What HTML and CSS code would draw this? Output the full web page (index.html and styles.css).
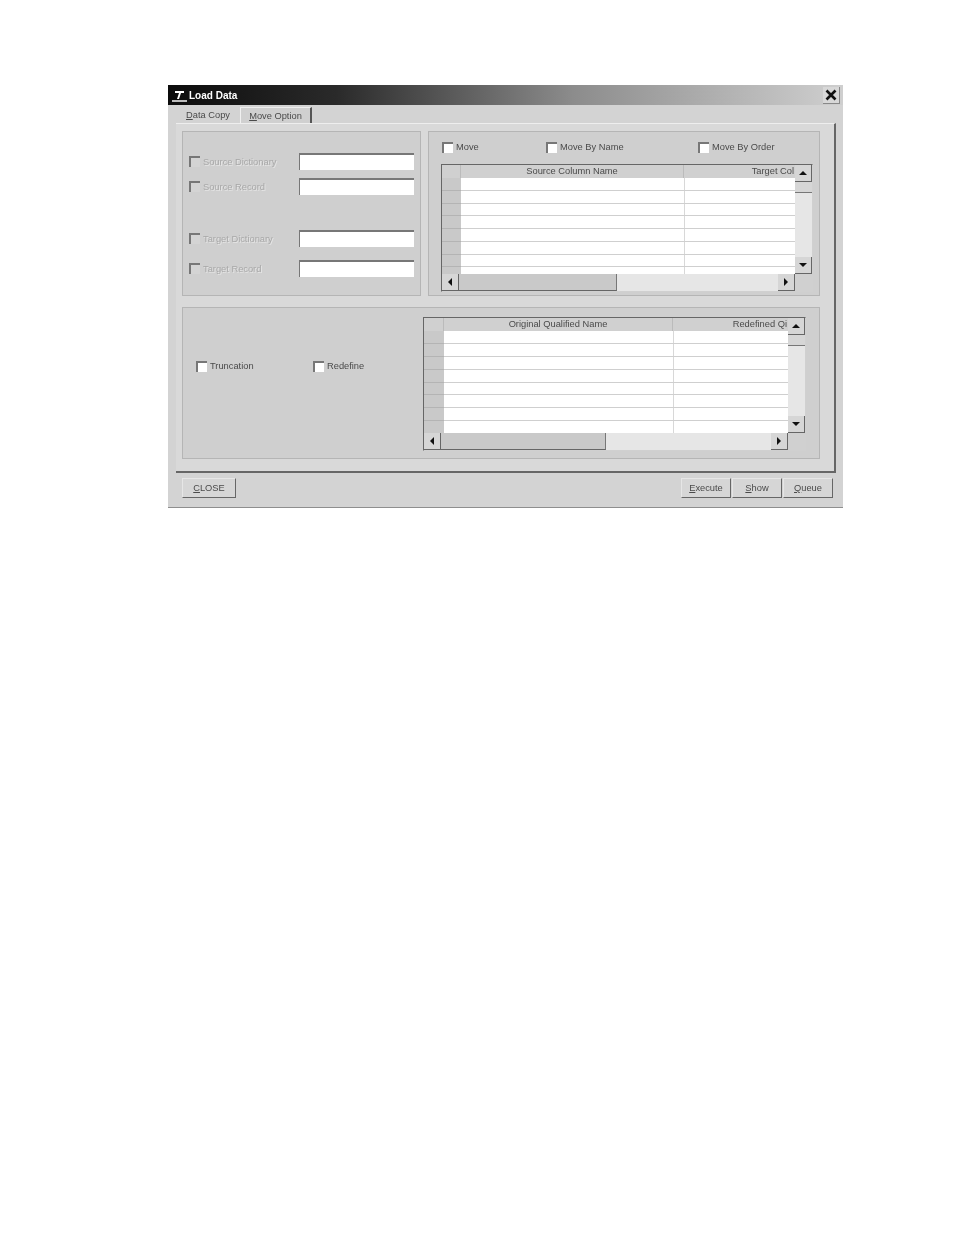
FILE: index.html
```html
<!DOCTYPE html>
<html lang="en">
<head>
    <meta charset="UTF-8">
    <meta name="viewport" content="width=device-width, initial-scale=1.0">
    <title>Load Data</title>

    <link rel="stylesheet" href="styles.css">
</head>
<body>
<div class="window">
    <div class="titlebar">
        <svg class="app-icon" width="17" height="15" viewBox="0 0 17 15">
            <path d="M4 3H13V5H10L8 11H6L8 5H4Z" fill="#fff"/>
            <path d="M1 12H16V14H1Z" fill="#bbb"/>
        </svg>
        <span class="title-text">Load Data</span>
        <button class="close-btn">
            <svg width="12" height="12" viewBox="0 0 12 12">
                <path d="M1.5 1.5L10.5 10.5M10.5 1.5L1.5 10.5" stroke="#111" stroke-width="2.6"/>
            </svg>
        </button>
    </div>

    <div class="tabs">
        <div class="tab tab-flat"><u>D</u>ata Copy</div>
        <div class="tab tab-raised"><u>M</u>ove Option</div>
    </div>

    <div class="page">
        <div class="top-row">
            <div class="group group-left">
                <div class="field">
                    <label class="check disabled"><span class="box"></span>Source Dictionary</label>
                    <div class="input"></div>
                </div>
                <div class="field gap-small">
                    <label class="check disabled"><span class="box"></span>Source Record</label>
                    <div class="input"></div>
                </div>
                <div class="field gap-large">
                    <label class="check disabled"><span class="box"></span>Target Dictionary</label>
                    <div class="input"></div>
                </div>
                <div class="field gap-medium">
                    <label class="check disabled"><span class="box"></span>Target Record</label>
                    <div class="input"></div>
                </div>
            </div>

            <div class="group group-right">
                <div class="check-row">
                    <label class="check move-all"><span class="box"></span>Move</label>
                    <label class="check move-name"><span class="box"></span>Move By Name</label>
                    <label class="check"><span class="box"></span>Move By Order</label>
                </div>
                <div class="data-grid grid-source">
                    <div class="grid-head">
                        <div class="head-cell"></div>
                        <div class="head-cell head-first">Source Column Name</div>
                        <div class="head-cell head-second">Target Col</div>
                    </div>
                    <div class="vscroll">
                        <div class="sb-btn"><span class="arrow arrow-up"></span></div>
                        <div class="sb-thumb-v"></div>
                        <div class="sb-track"></div>
                        <div class="sb-btn"><span class="arrow arrow-down"></span></div>
                    </div>
                    <div class="grid-body">
                        <div class="row"><div class="row-head"></div><div class="cell"></div><div class="cell"></div></div>
                        <div class="row"><div class="row-head"></div><div class="cell"></div><div class="cell"></div></div>
                        <div class="row"><div class="row-head"></div><div class="cell"></div><div class="cell"></div></div>
                        <div class="row"><div class="row-head"></div><div class="cell"></div><div class="cell"></div></div>
                        <div class="row"><div class="row-head"></div><div class="cell"></div><div class="cell"></div></div>
                        <div class="row"><div class="row-head"></div><div class="cell"></div><div class="cell"></div></div>
                        <div class="row"><div class="row-head"></div><div class="cell"></div><div class="cell"></div></div>
                        <div class="row"><div class="row-head"></div><div class="cell"></div><div class="cell"></div></div>
                    </div>
                    <div class="hscroll">
                        <div class="sb-btn"><span class="arrow arrow-left"></span></div>
                        <div class="sb-thumb-h"></div>
                        <div class="sb-track"></div>
                        <div class="sb-btn"><span class="arrow arrow-right"></span></div>
                    </div>
                    <div class="scroll-corner"></div>
                </div>
            </div>
        </div>

        <div class="group group-bottom">
            <div class="check-row bottom-checks">
                <label class="check truncation"><span class="box"></span>Truncation</label>
                <label class="check"><span class="box"></span>Redefine</label>
            </div>
            <div class="data-grid grid-qualified">
                <div class="grid-head">
                    <div class="head-cell"></div>
                    <div class="head-cell head-first">Original Qualified Name</div>
                    <div class="head-cell head-second">Redefined Qi</div>
                </div>
                <div class="vscroll">
                    <div class="sb-btn"><span class="arrow arrow-up"></span></div>
                    <div class="sb-thumb-v"></div>
                    <div class="sb-track"></div>
                    <div class="sb-btn"><span class="arrow arrow-down"></span></div>
                </div>
                <div class="grid-body">
                    <div class="row"><div class="row-head"></div><div class="cell"></div><div class="cell"></div></div>
                    <div class="row"><div class="row-head"></div><div class="cell"></div><div class="cell"></div></div>
                    <div class="row"><div class="row-head"></div><div class="cell"></div><div class="cell"></div></div>
                    <div class="row"><div class="row-head"></div><div class="cell"></div><div class="cell"></div></div>
                    <div class="row"><div class="row-head"></div><div class="cell"></div><div class="cell"></div></div>
                    <div class="row"><div class="row-head"></div><div class="cell"></div><div class="cell"></div></div>
                    <div class="row"><div class="row-head"></div><div class="cell"></div><div class="cell"></div></div>
                    <div class="row"><div class="row-head"></div><div class="cell"></div><div class="cell"></div></div>
                </div>
                <div class="hscroll">
                    <div class="sb-btn"><span class="arrow arrow-left"></span></div>
                    <div class="sb-thumb-h"></div>
                    <div class="sb-track"></div>
                    <div class="sb-btn"><span class="arrow arrow-right"></span></div>
                </div>
                <div class="scroll-corner"></div>
            </div>
        </div>
    </div>

    <div class="footer">
        <button class="btn btn-close"><u>C</u>LOSE</button>
        <div class="btn-group">
            <button class="btn"><u>E</u>xecute</button>
            <button class="btn"><u>S</u>how</button>
            <button class="btn"><u>Q</u>ueue</button>
        </div>
    </div>
</div>
</body>
</html>
```

FILE: styles.css
```css
*{
    box-sizing: border-box;
}
body{
    margin: 0;
    padding: 85px 0 0 168px;
    background-color: #fff;
    color: #4a4a4a;
    font-family: 'Liberation Sans', Arial, sans-serif;
    font-size: 9.3px;
}

.window{
    width: 675px;
    height: 423px;
    background-color: #d3d3d3;
    border-bottom: 1px solid #8e8e8e;
    filter: blur(.45px);
}

/* title bar */
.titlebar{
    display: flex;
    align-items: center;
    height: 20px;
    padding: 0 3px 0 3px;
    background: linear-gradient(to right, #0c0c0c 0%, #2a2a2a 25%, #8c8c8c 60%, #cfcfcf 100%);
}
.app-icon{
    flex: none;
}
.title-text{
    margin-left: 1px;
    color: #fff;
    font-size: 10px;
    font-weight: bold;
    flex: 1;
}
.close-btn{
    display: flex;
    align-items: center;
    justify-content: center;
    width: 17px;
    height: 17px;
    padding: 0;
    background-color: #d8d8d8;
    border: none;
    border-right: 1px solid #888;
    border-bottom: 1px solid #888;
}

/* tabs */
.tabs{
    display: flex;
    height: 18px;
    padding: 2px 0 0 8px;
}
.tab{
    display: flex;
    align-items: center;
    justify-content: center;
    height: 16px;
}
.tab-flat{
    width: 64px;
}
.tab-raised{
    width: 72px;
    border-top: 1px solid #eee;
    border-left: 1px solid #f0f0f0;
    border-right: 2px solid #555;
    background-color: #d0d0d0;
}

/* tab page */
.page{
    width: 660px;
    height: 350px;
    margin-left: 8px;
    padding: 7px 6px 0 6px;
    background-color: #d9d9d9;
    border-top: 1px solid #eee;
    border-right: 2px solid #666;
    border-bottom: 2px solid #666;
}
.top-row{
    display: flex;
    gap: 7px;
}
.group{
    background-color: #cfcfcf;
    border: 1px solid #b5b5b5;
}
.group-left{
    width: 239px;
    height: 165px;
    padding: 21px 0 0 6px;
}
.group-right{
    width: 392px;
    height: 165px;
    padding: 9px 0 0 13px;
}
.group-bottom{
    display: flex;
    width: 638px;
    height: 152px;
    margin-top: 11px;
    padding-left: 13px;
}

/* left side fields */
.field{
    display: grid;
    grid-template-columns: 110px 115px;
    align-items: center;
    height: 17px;
}
.gap-small{
    margin-top: 8px;
}
.gap-medium{
    margin-top: 13px;
}
.gap-large{
    margin-top: 35px;
}
.input{
    height: 17px;
    background-color: #fff;
    border-top: 2px solid #777;
    border-left: 1px solid #777;
}

/* check boxes */
.check{
    display: flex;
    align-items: center;
    gap: 3px;
    white-space: nowrap;
}
.box{
    display: block;
    width: 11px;
    height: 11px;
    background-color: #fff;
    border-top: 2px solid #777;
    border-left: 2px solid #777;
}
.disabled{
    color: #a8a8a8;
    text-shadow: 1px 1px 0 #e6e6e6;
}
.disabled .box{
    background-color: #d4d4d4;
}
.check-row{
    display: flex;
    align-items: center;
    height: 12px;
}
.move-all{
    width: 104px;
}
.move-name{
    width: 152px;
}
.bottom-checks{
    width: 227px;
    margin-top: 52px;
}
.truncation{
    width: 117px;
}

/* data grids */
.data-grid{
    display: grid;
    grid-template-columns: 1fr 17px;
    background-color: #d0d0d0;
    border: 1px solid #d0d0d0;
    border-top-color: #666;
    border-left-color: #666;
}
.grid-source{
    --cols: 19px 223px 111px;
    width: 372px;
    height: 128px;
    margin: 11px 0 0 -1px;
    grid-template-rows: 13px 96px 17px;
}
.grid-qualified{
    --cols: 20px 229px 115px;
    width: 383px;
    height: 134px;
    margin-top: 9px;
    grid-template-rows: 13px 102px 17px;
}
.grid-head{
    display: grid;
    grid-template-columns: var(--cols);
    grid-column: 1;
    grid-row: 1;
    overflow: hidden;
}
.head-cell{
    height: 13px;
    line-height: 13px;
    white-space: nowrap;
    overflow: hidden;
    border-right: 1px solid #bbb;
}
.head-first{
    text-align: center;
}
.head-second{
    text-align: right;
    padding-right: 1px;
    border-right: none;
}
.grid-body{
    display: flex;
    flex-direction: column;
    grid-column: 1;
    grid-row: 2;
}
.row{
    display: grid;
    flex: 1;
    grid-template-columns: var(--cols);
    border-bottom: 1px solid #cfcfcf;
}
.row:last-child{
    border-bottom: none;
}
.grid-source .row:last-child{
    flex: .55;
}
.row-head{
    background-color: #c9c9c9;
    margin-bottom: -1px;
    border-bottom: 1px solid #b4b4b4;
}
.cell{
    background-color: #fff;
}
.cell + .cell{
    border-left: 1px solid #d8d8d8;
}

/* scrollbars */
.vscroll{
    display: flex;
    flex-direction: column;
    grid-column: 2;
    grid-row: 1 / 3;
}
.hscroll{
    display: flex;
    grid-column: 1;
    grid-row: 3;
}
.sb-btn{
    display: flex;
    align-items: center;
    justify-content: center;
    flex: none;
    width: 17px;
    height: 17px;
    background-color: #d6d6d6;
    border-right: 1px solid #666;
    border-bottom: 1px solid #666;
}
.sb-track{
    flex: 1;
    background-color: #e6e6e6;
}
.sb-thumb-v{
    flex: none;
    height: 11px;
    background-color: #d6d6d6;
    border-bottom: 1px solid #777;
}
.sb-thumb-h{
    flex: none;
    background-color: #c9c9c9;
    border-bottom: 1px solid #666;
    border-right: 1px solid #777;
}
.grid-source .sb-thumb-h{
    width: 158px;
}
.grid-qualified .sb-thumb-h{
    width: 165px;
}
.scroll-corner{
    grid-column: 2;
    grid-row: 3;
}
.arrow{
    display: block;
    width: 0;
    height: 0;
    border: 4px solid transparent;
}
.arrow-up{
    border-top: none;
    border-bottom-color: #111;
}
.arrow-down{
    border-bottom: none;
    border-top-color: #111;
}
.arrow-left{
    border-left: none;
    border-right-color: #111;
}
.arrow-right{
    border-right: none;
    border-left-color: #111;
}

/* bottom buttons */
.footer{
    display: flex;
    justify-content: space-between;
    padding: 5px 10px 0 14px;
}
.btn-group{
    display: flex;
    gap: 1px;
}
.btn{
    width: 50px;
    height: 20px;
    padding: 0;
    background-color: #d6d6d6;
    color: #4a4a4a;
    font-family: inherit;
    font-size: 9.3px;
    border: none;
    border-top: 1px solid #e6e6e6;
    border-left: 1px solid #e6e6e6;
    border-right: 1px solid #666;
    border-bottom: 1px solid #666;
}
.btn-close{
    width: 54px;
}
```
